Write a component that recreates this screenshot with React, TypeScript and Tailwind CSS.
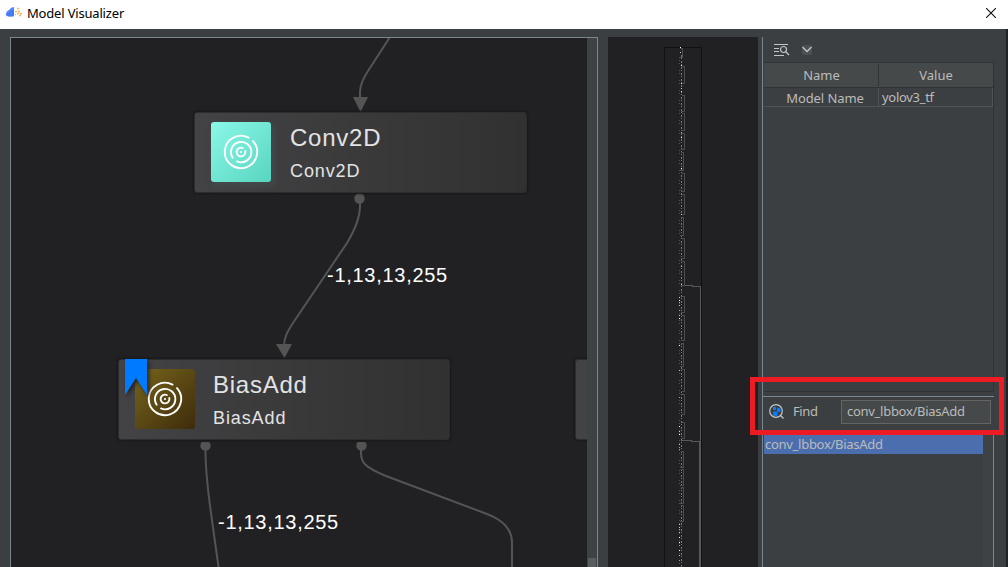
import React from "react";

const MAP_TOP = 37;
const ui = "font-['Noto_Sans','Noto_Sans_CJK_SC',sans-serif]";
const arial = "font-['Liberation_Sans',sans-serif]";

function Target() {
  return (
    <svg width="36" height="36" viewBox="-18 -18 36 36" fill="none" stroke="#fff" strokeWidth="1.9" strokeLinecap="round">
      <path d="M7.500 -14.400A16.2 16.2 0 1 0 12 -10.9" />
      <path d="M-8.3 5.8A10.2 10.2 0 1 1 -4 9.4" />
      <path d="M1.800 -4A4.4 4.4 0 1 0 4.3 -1" />
      <circle r="1.1" fill="#fff" stroke="none" />
    </svg>
  );
}

type NodeProps = { name: string; kind: string; place: string; pad: string; gap: string; tile: string; flagged?: boolean };

function GraphNode({ name, kind, place, pad, gap, tile, flagged }: NodeProps) {
  return (
    <div className={`absolute flex h-[81px] items-start rounded-[3px] border border-[#2d2d2f] bg-linear-to-r from-[#434345] to-[#313131] pt-[9px] shadow-[0_0_2px_1px_#19191b] ${place} ${pad}`}>
      <div className={`flex size-[60px] shrink-0 items-center justify-center rounded-[3px] ${tile}`}>
        <Target />
      </div>
      <div className={`text-[#e3e3e3] ${arial} ${gap}`}>
        <div className="mt-[2px] h-[28px] text-[24px] leading-[28px] tracking-[0.75px]">{name}</div>
        <div className="mt-[8px] text-[18px] leading-[22px] tracking-[0.9px]">{kind}</div>
      </div>
      {flagged && (
        <svg className="absolute -top-px left-[6px] drop-shadow-[2px_2px_2px_#222]" width="22" height="36">
          <path d="M0 0H22V36L11 19L0 36Z" fill="#007bff" />
        </svg>
      )}
    </div>
  );
}

const tracks: [number, number, number][] = [
  [682, 48, 57], [684, 66, 83], [684, 95, 111], [684, 113, 130], [684, 133, 149], [683, 152, 170],
  [684, 173, 191], [684, 194, 214], [683, 217, 235], [684, 238, 258], [684, 261, 285],
  [684, 296, 312], [684, 315, 340], [683, 343, 366], [684, 369, 391], [684, 394, 414], [684, 422, 438],
  [683, 451, 467], [683, 469, 485], [683, 487, 503], [683, 505, 521],
];
const sparks: [number, number, string][] = [
  [680, 47, "#fff"], [680, 52, "#a5dcff"], [681, 65, "#fff"], [681, 83, "#e6d797"], [681, 88, "#6effc4"],
  [681, 91, "#d6eee8"], [681, 132, "#79bfff"], [681, 137, "#fff"], [681, 168, "#fff"], [681, 214, "#9cf"],
  [681, 266, "#c6e516"], [681, 284, "#c6e516"], [679, 297, "#6effc4"], [679, 300, "#fff"], [679, 302, "#59b7ff"],
  [679, 305, "#6effc4"], [679, 310, "#59b7ff"], [679, 315, "#6effc4"], [679, 318, "#fff"], [679, 345, "#fff"],
  [679, 370, "#6effc4"], [679, 397, "#59b7ff"], [679, 426, "#fff"], [679, 431, "#6effc4"], [679, 434, "#fff"],
  [679, 444, "#6effc4"], [679, 447, "#59b7ff"], [679, 449, "#59b7ff"], [679, 524, "#6effc4"], [679, 527, "#9cf"],
  [679, 529, "#59b7ff"], [679, 532, "#6effc4"], [679, 537, "#fff"], [679, 542, "#fff"], [679, 545, "#59b7ff"],
  [679, 550, "#fff"], [679, 555, "#6effc4"], [679, 560, "#59b7ff"],
];

function Minimap() {
  return (
    <svg width="150" height="530" viewBox={`608 ${MAP_TOP} 150 530`} shapeRendering="crispEdges" fill="none">
      <path d="M664.5 567V47.5H701.5V567" stroke="#111113" />
      <path d="M681.5 55V567" stroke="#777779" strokeDasharray="2 1 1 2" />
      <path d="M679.5 60V567" stroke="#505052" strokeDasharray="1 2 1 6" />
      {tracks.map(([x, a, b]) => (
        <path key={a} d={`M${x - 2} ${a + 0.5}H${x + 0.5}V${b + 0.5}H${x - 3}`} stroke="#4c4c4e" />
      ))}
      <path d="M684 285.5H692V286.5H700.5V567" stroke="#58585a" />
      <path d="M682 440.5H691V441.5H699.5V567" stroke="#58585a" />
      {sparks.map(([x, y, c]) => (
        <rect key={y} x={x} y={y} width="1" height="1" fill={c} />
      ))}
    </svg>
  );
}

export default function App() {
  return (
    <div className={`flex h-[567px] w-[1008px] flex-col overflow-hidden bg-[#3c3f41] text-[#bbbbbb] ${ui}`}>
      <header className="flex h-[29px] shrink-0 items-center bg-white text-black">
        <svg className="-mt-[3px] ml-[6px]" width="17" height="12" viewBox="0 0 17 12">
          <path d="M0 8Q0 4 3 3Q5 0 8 0V9Q5 10 1 9Z" fill="#5287f8" />
          <path d="M0 7Q4 5 8 2V9Q5 10 1 9Z" fill="#3871ed" opacity=".55" />
          <path d="M11 1.500h2M9 4.500h2M12 4.500h2M9 7.500h1M11 6.500h2M13 8.500h2M14 6.500h2" stroke="#f6b35c" strokeWidth="1.3" />
        </svg>
        <span className="-mt-[3px] ml-[4px] text-[13px] leading-[20px] tracking-[-0.18px]">Model Visualizer</span>
        <svg className="-mt-[3px] mr-[12px] ml-auto" width="10" height="10" stroke="#111" strokeWidth="1.1">
          <path d="M0 0L10 10M10 0L0 10" />
        </svg>
      </header>

      <div className="flex min-h-0 flex-1 pt-[8px] pl-[10px]">
        <main className="flex w-[588px] shrink-0 border-t border-r border-l border-[#788792] bg-[#212123]">
          <div className="relative min-w-0 flex-1 overflow-hidden">
            <svg className="absolute inset-0" width="576" height="529" viewBox="11 38 576 529" fill="none" stroke="#545454" strokeWidth="2">
              <path d="M390 37L368 71C362 80 360 86 360 92V99" />
              <path d="M360 199V206C360 215 358 225 347 243L297 317C286 333 284 338 284 347" />
              <path d="M205.500 446V454C206 480 210 507 219 570" />
              <path d="M361 446V453C361 462 364 467 386 476L487 514C506 521 512 531 512 543V570" />
              <g fill="#545454" stroke="none">
                <path d="M353 97H368L360.500 112Z" />
                <path d="M276 344H292L284.500 358Z" />
                <circle cx="359.500" cy="198.500" r="5.200" />
                <path d="M201.700 442H209.300A5.200 5.200 0 1 1 201.700 442Z" />
                <path d="M357.700 442H365.300A5.200 5.200 0 1 1 357.700 442Z" />
              </g>
            </svg>
            <GraphNode name="Conv2D" kind="Conv2D" place="top-[74px] left-[183px] w-[333px]" pad="pl-[16px]" gap="ml-[19px]" tile="bg-linear-to-br from-[#8af8e8] to-[#57d5bf] shadow-[3px_3px_6px_#48565688]" />
            <GraphNode name="BiasAdd" kind="BiasAdd" place="top-[321px] left-[107px] w-[332px]" pad="pl-[16px]" gap="ml-[18px]" tile="bg-linear-to-br from-[#78661d] to-[#3e2c0b]" flagged />
            <div className="absolute top-[321px] left-[564px] h-[81px] w-[40px] rounded-[3px] border border-[#2d2d2f] bg-[#434345] shadow-[0_0_2px_1px_#19191b]" />
            <span className={`absolute top-[225px] left-[316px] text-[20px] leading-[24px] tracking-[0.72px] text-white ${arial}`}>-1,13,13,255</span>
            <span className={`absolute top-[472px] left-[207px] text-[20px] leading-[24px] tracking-[0.72px] text-white ${arial}`}>-1,13,13,255</span>
          </div>
          <div className="flex w-[10px] flex-col justify-end bg-[#3f4244] px-px">
            <div className="h-[9px] bg-[#5a5d5e]" />
          </div>
        </main>

        <section className="ml-[10px] w-[150px] shrink-0 bg-[#212123]">
          <Minimap />
        </section>

        <aside className="relative ml-[4px] flex w-[232px] shrink-0 flex-col border-l border-[#788792]">
          <div className="flex h-[25px] shrink-0 items-center pl-[11px]">
            <svg width="16" height="12" fill="none" stroke="#c2c4c5">
              <path d="M0 .5H14M0 4.500H5M0 7.500H5M0 11.500H10" />
              <circle cx="9.500" cy="5.500" r="3" strokeWidth="1.200" />
              <path d="M12 8L15 11" strokeWidth="1.200" />
            </svg>
            <span className="ml-[12px] flex h-[10px] w-[10px] items-center justify-center rounded-[2px] bg-[#4c5052]">
              <svg width="10" height="7" fill="none" stroke="#c6c8c9" strokeWidth="1.300">
                <path d="M.5 1L5 5.500L9.500 1" />
              </svg>
            </span>
          </div>
          <div className="ml-px flex h-[330px] shrink-0 flex-col border-t border-r border-b border-[#303234] text-[13px] leading-[18px]">
            <div className="flex h-[25px] shrink-0 items-center border-b border-[#303234] bg-[#45494a] text-center">
              <div className="flex h-[22px] w-[115px] items-center justify-center border-r border-[#333638] pl-px">Name</div>
              <div className="flex-1">Value</div>
            </div>
            <div className="flex h-[19px] shrink-0 border-b border-[#505355]">
              <div className="flex w-[115px] items-center justify-center border-r border-[#505355] pt-[2px] pl-[8px] tracking-[-0.08px]">Model Name</div>
              <div className="flex flex-1 items-center border-r border-[#505355] pl-[3px] tracking-[-0.3px]">yolov3_tf</div>
            </div>
          </div>
          <div className="mt-[4px] flex h-[39px] shrink-0 items-start border-t border-[#788792] pt-[3px] text-[13px]">
            <svg className="mt-[4px] ml-[6px]" width="16" height="16" fill="none" stroke="#bfc7ce" strokeWidth="1.200">
              <circle cx="7" cy="7" r="6.300" />
              <path d="M11.500 11.500L14.500 14.500" />
              <g fill="#087cff" stroke="none">
                <rect x="4" y="3" width="3" height="3" />
                <rect x="8" y="4" width="3.500" height="4" rx="1" />
                <rect x="4" y="7.500" width="4.500" height="4.500" rx="1" />
              </g>
            </svg>
            <span className="mt-[2px] ml-[8px] leading-[18px] tracking-[-0.4px]">Find</span>
            <div className="mr-[3px] ml-auto flex h-[24px] w-[150px] items-center border border-[#646464] bg-[#45494a] pb-[2px] pl-[5px] leading-[18px] tracking-[-0.28px]">conv_lbbox/BiasAdd</div>
          </div>
          <div className="flex-1 border-r border-[#788792]">
            <div className="flex h-full">
              <div className="ml-px w-[219px]">
                <div className="h-[19px] bg-[#4b6eaf] pl-px text-[13px] leading-[18px] tracking-[-0.28px]">conv_lbbox/BiasAdd</div>
              </div>
              <div className="flex-1 bg-[#3f4244]" />
            </div>
          </div>
          <div className="pointer-events-none absolute top-[340px] -left-[13px] h-[58px] w-[254px] border-[5px] border-[#ed1c24]" />
        </aside>
        <div className="-mt-[8px] ml-auto w-[2px] bg-[#202224]" />
      </div>
    </div>
  );
}
